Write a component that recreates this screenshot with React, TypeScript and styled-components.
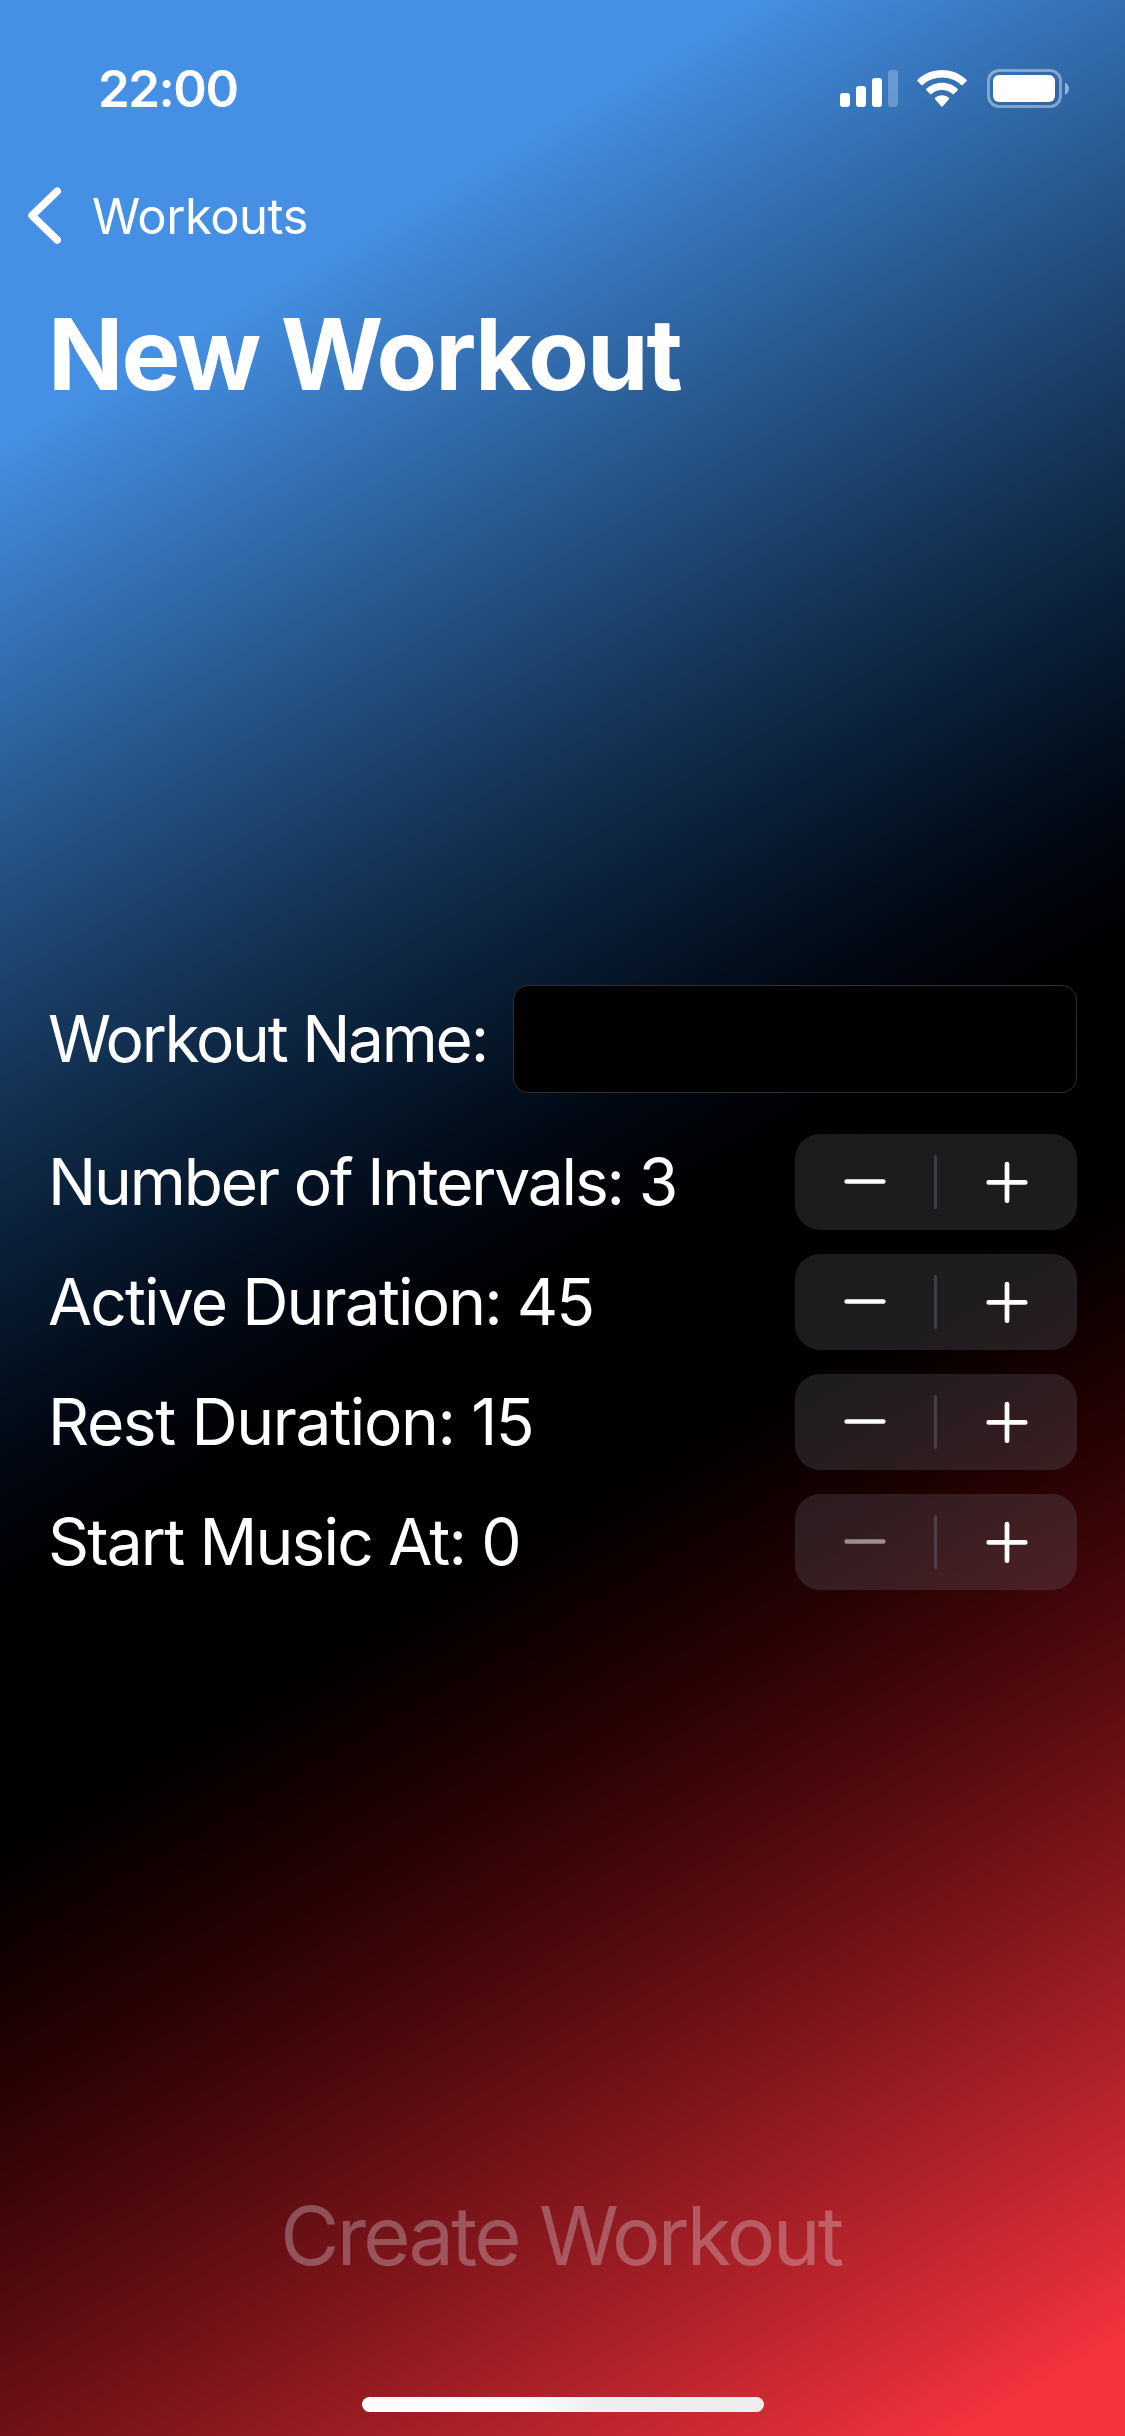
import React from 'react';
import styled, { createGlobalStyle } from 'styled-components';

const Global = createGlobalStyle`
  * { box-sizing: border-box; }
  body { margin: 0; background: #000; }
  button { border: 0; padding: 0; background: none; color: inherit; font: inherit; }
`;

const Screen = styled.main`
  width: 1125px;
  height: 2436px;
  display: flex;
  flex-direction: column;
  overflow: hidden;
  color: #fff;
  font-family: Inter, Roboto, sans-serif;
  background: linear-gradient(149.6deg in oklab, #4590e4 14.3%, #000 55.7%, #f5333e 97%);
`;

const StatusBar = styled.header`
  height: 132px;
  display: flex;
  justify-content: space-between;
  padding: 0 56px 0 98px;
`;

const Clock = styled.time`
  margin-top: 58px;
  font-size: 51px;
  line-height: 62px;
  font-weight: 600;
  letter-spacing: -1.5px;
`;

const StatusIcons = styled.div`
  display: flex;
  margin-top: 66px;
`;

const NavBar = styled.nav`
  height: 168px;
  display: flex;
  align-items: center;
  padding-left: 26px;
`;

const BackButton = styled.button`
  display: flex;
  align-items: center;
  gap: 29px;
  font-size: 49px;
  line-height: 60px;
  letter-spacing: -0.5px;
`;

const BackLabel = styled.span`
  padding-top: 1px;
`;

const Title = styled.h1`
  margin: -2px 0 2px;
  height: 112px;
  padding-left: 48px;
  font-size: 99px;
  line-height: 112px;
  font-weight: 700;
  letter-spacing: -2px;
`;

const Form = styled.form`
  display: flex;
  flex-direction: column;
  gap: 24px;
  margin-top: 573px;
  padding: 0 48px;
`;

const Row = styled.div<{ $tall?: boolean }>`
  height: ${p => (p.$tall ? 108 : 96)}px;
  display: flex;
  align-items: center;
  justify-content: space-between;
  margin-bottom: ${p => (p.$tall ? 17 : 0)}px;
`;

const Label = styled.label<{ $spacing: number }>`
  font-size: 64px;
  line-height: 78px;
  white-space: pre;
  letter-spacing: ${p => p.$spacing}px;
`;

const NameField = styled.input`
  width: 564px;
  height: 108px;
  padding: 0 20px;
  border: 1px solid #303033;
  border-radius: 15px;
  background: #000;
  color: #fff;
  font: inherit;
  font-size: 51px;
  outline: none;
`;

const StepperBox = styled.div`
  width: 282px;
  height: 96px;
  display: grid;
  grid-template-columns: 139px 3px 140px;
  align-items: center;
  border-radius: 25px;
  background: rgba(118, 118, 128, 0.24);
`;

const StepButton = styled.button<{ $dim?: boolean }>`
  height: 96px;
  display: flex;
  align-items: center;
  justify-content: center;
  opacity: ${p => (p.$dim ? 0.5 : 1)};
`;

const Divider = styled.span`
  height: 54px;
  border-radius: 2px;
  background: rgba(142, 142, 157, 0.3);
`;

const Footer = styled.footer`
  flex: 1;
  display: flex;
  flex-direction: column;
  align-items: center;
  justify-content: flex-end;
`;

const CreateButton = styled.button`
  font-size: 81px;
  line-height: 100px;
  margin: 0 3px 111px 0;
  letter-spacing: -2.7px;
  color: rgba(235, 235, 245, 0.3);
`;

const HomeIndicator = styled.div`
  width: 402px;
  height: 15px;
  margin-bottom: 24px;
  border-radius: 8px;
  background: linear-gradient(90deg, #fcfcfc, #fff 38%, #eee 58%, #ededed);
`;

const SignalIcon = styled.svg`
  width: 58px;
  height: 44px;
`;

const WifiIcon = styled.svg`
  width: 50px;
  height: 44px;
  margin: 0 20px 0 19px;
`;

const BatteryIcon = styled.svg`
  width: 82px;
  height: 44px;
`;

const Signal = () => (
  <SignalIcon viewBox="0 0 58 44" fill="#fff">
    <rect x="0" y="27" width="10" height="14" rx="3" />
    <rect x="16" y="20" width="10" height="21" rx="3" />
    <rect x="32" y="12" width="10" height="29" rx="3" />
    <rect x="48" y="4" width="10" height="37" rx="3" opacity="0.25" />
  </SignalIcon>
);

const Wifi = () => (
  <WifiIcon viewBox="0 0 50 44" fill="#fff">
    <path d="M25 4C15.500 4 6.900 7.700 .6 13.700Q-.1 14.400 .6 15.200L4.400 19.100Q5 19.600 5.700 18.900C10.800 14.200 17.500 11.400 25 11.400S39.200 14.200 44.300 18.900Q45 19.600 45.600 19.100L49.400 15.200Q50.100 14.400 49.400 13.700C43.100 7.700 34.500 4 25 4Z" />
    <path d="M25 16.700C19 16.700 13.500 19 9.400 22.700Q8.600 23.400 9.400 24.200L13.100 28Q13.800 28.600 14.600 27.900C17.400 25.500 21 24 25 24S32.600 25.500 35.400 27.900Q36.200 28.600 36.900 28L40.600 24.200Q41.400 23.400 40.600 22.700C36.500 19 31 16.700 25 16.700Z" />
    <path d="M25 29.300C22.400 29.300 20 30.200 18.100 31.700Q17.300 32.400 18.100 33.200L24.200 40.300Q25 41.200 25.800 40.300L31.900 33.200Q32.700 32.400 31.900 31.700C30 30.200 27.600 29.300 25 29.300Z" />
  </WifiIcon>
);

const Battery = () => (
  <BatteryIcon viewBox="0 0 82 44" fill="none">
    <rect x="1.5" y="4.5" width="72" height="36" rx="10.5" stroke="#fff" strokeOpacity="0.4" strokeWidth="3" />
    <rect x="6" y="9" width="62" height="27" rx="6" fill="#fff" />
    <path d="M78 16.500C83.300 19 83.300 26.500 78 28.800Z" fill="#fff" fillOpacity="0.5" />
  </BatteryIcon>
);

const Chevron = () => (
  <svg width="37" height="60" viewBox="0 0 37 60" fill="none" stroke="#fff" strokeWidth="7.5" strokeLinecap="round" strokeLinejoin="round">
    <path d="M31.200 5.200 6 29.500 31.200 54" />
  </svg>
);

const Glyph = ({ plus }: { plus?: boolean }) => (
  <svg width="42" height="42" viewBox="0 0 42 42" stroke="#fff" strokeWidth="4.7" strokeLinecap="round">
    <path d={plus ? 'M2.700 21.400H39.300M21 3.100V39.700' : 'M2.700 20.500H39.300'} />
  </svg>
);

const Stepper = ({ atMin }: { atMin?: boolean }) => (
  <StepperBox>
    <StepButton type="button" $dim={atMin} aria-label="Decrease"><Glyph /></StepButton>
    <Divider />
    <StepButton type="button" aria-label="Increase"><Glyph plus /></StepButton>
  </StepperBox>
);

const settings = [
  { label: 'Number of Intervals: 3', spacing: -2.15 },
  { label: 'Active Duration: 45', spacing: -1.85 },
  { label: 'Rest Duration: 15', spacing: -1.35 },
  { label: 'Start Music At: 0', spacing: -1.8, atMin: true },
];

export default function App() {
  return (
    <Screen>
      <Global />
      <StatusBar>
        <Clock>22:00</Clock>
        <StatusIcons><Signal /><Wifi /><Battery /></StatusIcons>
      </StatusBar>
      <NavBar>
        <BackButton type="button"><Chevron /><BackLabel>Workouts</BackLabel></BackButton>
      </NavBar>
      <Title>New Workout</Title>
      <Form>
        <Row $tall>
          <Label $spacing={-2.25} htmlFor="name">Workout Name:</Label>
          <NameField id="name" />
        </Row>
        {settings.map(s => (
          <Row key={s.label}>
            <Label as="span" $spacing={s.spacing}>{s.label}</Label>
            <Stepper atMin={s.atMin} />
          </Row>
        ))}
      </Form>
      <Footer>
        <CreateButton type="button">Create Workout</CreateButton>
        <HomeIndicator />
      </Footer>
    </Screen>
  );
}
